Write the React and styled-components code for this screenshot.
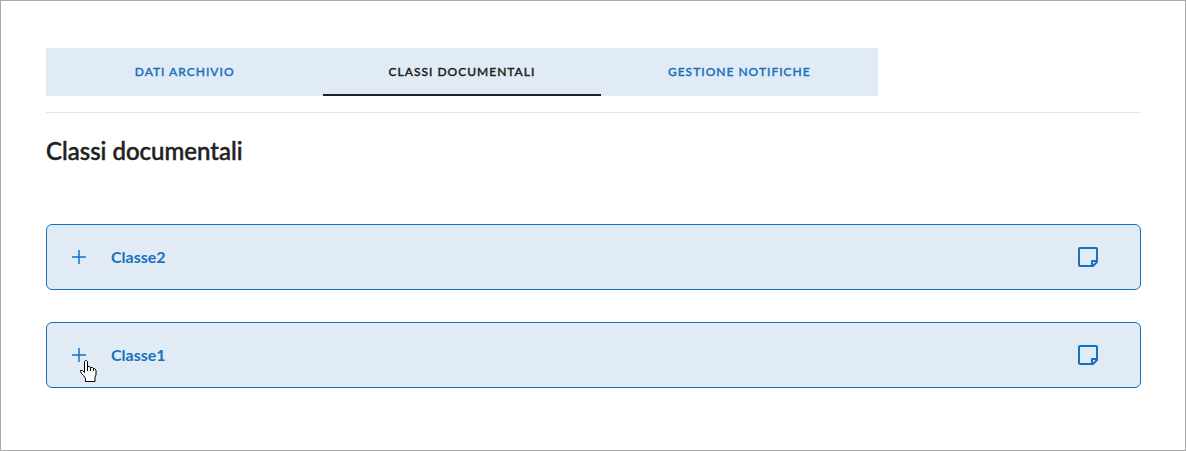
import React, { useState } from "react";
import styled, { createGlobalStyle } from "styled-components";

const blue = "#1771bd";
const paleBlue = "#e1ebf6";
const ink = "#212121";

const GlobalStyle = createGlobalStyle`
  *, *::before, *::after { box-sizing: border-box; }
  body { margin: 0; background: #fff; color: ${ink}; font-family: Lato, "Liberation Sans", sans-serif; }
`;

const Page = styled.main`
  min-height: 100vh;
  border: 1px solid #a9a9a9;
  padding: 47px 44px 48px 45px;
`;

const TabBar = styled.nav`
  display: grid;
  grid-template-columns: repeat(3, 1fr);
  max-width: 832px;
  background: ${paleBlue};
`;

const Tab = styled.button`
  height: 48px;
  padding: 2px 0 0;
  border: 0;
  border-bottom: 2px solid ${(p) => (p.$active ? ink : "transparent")};
  background: none;
  color: ${(p) => (p.$active ? ink : blue)};
  font: 500 12px/16px Lato, "Liberation Sans", sans-serif;
  letter-spacing: 1px;
  -webkit-text-stroke: 0.03em currentColor;
  text-transform: uppercase;
  cursor: pointer;
`;

const Divider = styled.hr`
  margin: 16px 0 0;
  border: 0;
  border-top: 1px solid #e4e4e4;
`;

const Title = styled.h1`
  margin: 22px 0 58px;
  font-size: 24px;
  line-height: 31px;
  font-weight: 500;
  -webkit-text-stroke: 0.02em currentColor;
`;

const ClassList = styled.ul`
  display: flex;
  flex-direction: column;
  gap: 32px;
  margin: 0;
  padding: 0;
  list-style: none;
`;

const ClassRow = styled.li`
  display: flex;
  align-items: center;
  height: 66px;
  padding: 0 40px 0 20px;
  border: 1px solid ${blue};
  border-radius: 6px;
  background: ${paleBlue};
`;

const IconButton = styled.button`
  position: relative;
  display: flex;
  padding: 0;
  border: 0;
  background: none;
  color: ${blue};
  cursor: pointer;
`;

const ClassName = styled.span`
  flex: 1;
  padding-left: 20px;
  color: ${blue};
  font-size: 16px;
  line-height: 24px;
  font-weight: 700;
`;

const Pointer = styled.svg`
  position: absolute;
  left: 13px;
  top: 17px;
  pointer-events: none;
`;

const PlusIcon = () => (
  <svg width="24" height="24" viewBox="0 0 24 24" fill="none" stroke="currentColor" strokeWidth="1.5" aria-hidden="true">
    <path d="M5 12h14M12 5v14" />
  </svg>
);

const NoteIcon = () => (
  <svg width="24" height="24" viewBox="0 0 24 24" fill="none" stroke="currentColor" strokeWidth="2" strokeLinejoin="round" aria-hidden="true">
    <path d="M4 3h16q1 0 1 1v13l-4 4H4q-1 0-1-1V4q0-1 1-1zM21 16h-5v5" />
  </svg>
);

const HandPointer = () => (
  <Pointer width="17" height="22" viewBox="0 0 17 22" aria-hidden="true">
    <path
      d="M5.500 .5h1l1 1v5h2l1 1h2l1 1h1l1.500 1.500v5l-1 2v4.500h-9.500v-3l-2-3-2-2-1-2v-1h2l2 2V1.500z"
      fill="#fff" stroke="#000"
    />
    <path d="M7.500 6v5M10.500 7v4M13.500 8v3" stroke="#000" />
  </Pointer>
);

const tabs = ["Dati archivio", "Classi documentali", "Gestione notifiche"];

export default function App() {
  const [active, setActive] = useState(1);
  return (
    <>
      <GlobalStyle />
      <Page>
        <TabBar aria-label="Sezioni">
          {tabs.map((name, i) => (
            <Tab key={name} type="button" $active={i === active} onClick={() => setActive(i)}>
              {name}
            </Tab>
          ))}
        </TabBar>
        <Divider />
        <Title>Classi documentali</Title>
        <ClassList>
          {["Classe2", "Classe1"].map((name) => (
            <ClassRow key={name}>
              <IconButton type="button" aria-label={`Espandi ${name}`}>
                <PlusIcon />
                {name === "Classe1" && <HandPointer />}
              </IconButton>
              <ClassName>{name}</ClassName>
              <IconButton type="button" aria-label={`Note ${name}`}>
                <NoteIcon />
              </IconButton>
            </ClassRow>
          ))}
        </ClassList>
      </Page>
    </>
  );
}
